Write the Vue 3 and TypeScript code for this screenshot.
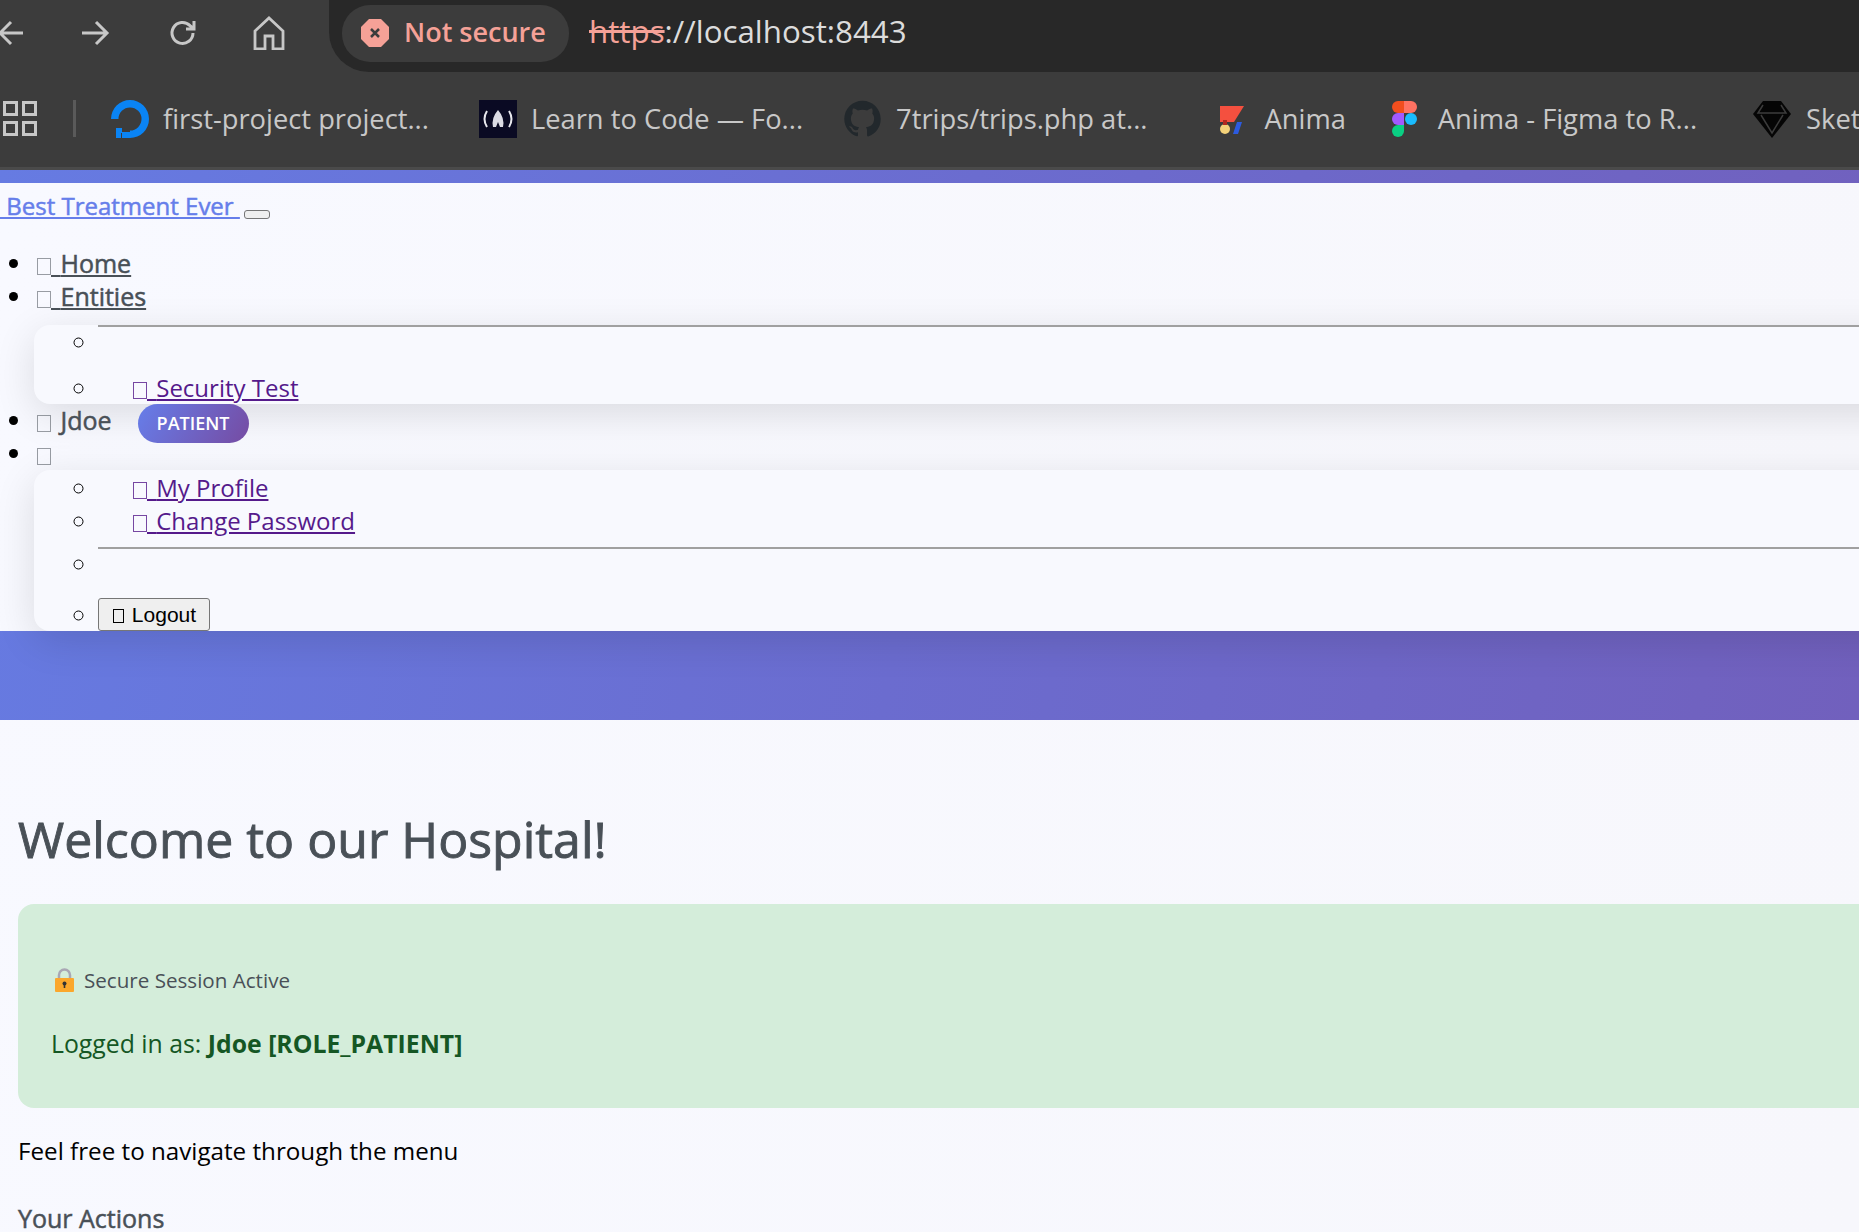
<template>
  <div class="screen">
    <!-- browser chrome, part of the screenshot -->
    <div class="toolbar">
      <svg class="tool back" width="28" height="28" viewBox="0 0 28 28"><path d="M26 14H3M14 3 3 14l11 11" /></svg>
      <svg class="tool forward" width="30" height="28" viewBox="0 0 30 28"><path d="M2 14h25M16 3l11 11-11 11" /></svg>
      <svg class="tool reload" width="30" height="30" viewBox="0 0 30 30"><path d="M25 15a10.500 10.500 0 1 1-3-7.400L26 11M26 3v8h-8" /></svg>
      <svg class="tool home" width="32" height="34" viewBox="0 0 32 34"><path d="M2 15 16 2l14 13v18H20V20h-8v13H2z" /></svg>
      <div class="omnibox">
        <div class="chip">
          <svg width="28" height="28" viewBox="0 0 28 28"><path class="octagon" d="M8 0h12l8 8v12l-8 8H8l-8-8V8z" /><path class="cross" d="m10 10 8 8m0-8-8 8" /></svg>
          <span class="chip-text">Not secure</span>
        </div>
        <span class="url"><s>https</s>://localhost:8443</span>
      </div>
    </div>

    <div class="bookmarks">
      <svg class="apps" width="34" height="35" viewBox="0 0 34 35">
        <rect x="1.500" y="1.500" width="12" height="12" /><rect x="20.500" y="1.500" width="12" height="12" />
        <rect x="1.500" y="21.500" width="12" height="12" /><rect x="20.500" y="21.500" width="12" height="12" />
      </svg>
      <i class="sep"></i>
      <a v-for="b in bookmarks" :key="b.icon" class="mark" :class="'mark-' + b.icon">
        <svg v-if="b.icon === 'ocean'" width="39" height="38" viewBox="0 0 39 38">
          <path d="M20 38v-7.500A11.500 11.500 0 1 0 8.500 19H1A19 19 0 1 1 20 38z" fill="#0a84f5" />
          <path d="M12 32h8v6h-8zM6 28h6v5H6zM6 33h5v5H6z" fill="#0a84f5" />
        </svg>
        <svg v-else-if="b.icon === 'code'" width="38" height="38" viewBox="0 0 38 38">
          <rect width="38" height="38" fill="#0a0a23" />
          <path d="M8 11q-5 8 0 16M30 11q5 8 0 16" fill="none" stroke="#e8e8ee" stroke-width="2" />
          <path d="M19 10q7 8 5 17h-3l-2-5-2 5h-3q-2-9 5-17z" fill="#dcdce4" />
        </svg>
        <svg v-else-if="b.icon === 'github'" width="39" height="38" viewBox="0 0 24 24">
          <path fill="#22282c" d="M12 .5C5.650.5.500 5.650.500 12c0 5.080 3.290 9.390 7.860 10.910.57.100.78-.250.78-.550v-2c-3.200.700-3.870-1.370-3.870-1.370-.52-1.330-1.280-1.680-1.280-1.680-1.040-.710.080-.700.080-.700 1.150.080 1.760 1.190 1.760 1.190 1.030 1.750 2.690 1.250 3.350.950.100-.740.400-1.250.730-1.540-2.550-.290-5.240-1.280-5.240-5.680 0-1.250.450-2.280 1.180-3.080-.120-.290-.510-1.460.110-3.040 0 0 .970-.310 3.170 1.180a11 11 0 0 1 5.760 0c2.200-1.490 3.170-1.180 3.170-1.180.620 1.580.230 2.750.110 3.040.740.800 1.180 1.830 1.180 3.080 0 4.410-2.690 5.380-5.250 5.670.410.360.780 1.050.780 2.120v3.140c0 .310.210.660.790.550A11.500 11.500 0 0 0 23.500 12C23.500 5.650 18.350.500 12 .500z" />
        </svg>
        <svg v-else-if="b.icon === 'anima'" width="27" height="30" viewBox="0 0 27 30">
          <path d="M3 2h24L17 18H3z" fill="#f4503f" />
          <path d="M20 18h5l-4 12h-5z" fill="#2c5be0" />
          <circle cx="8" cy="25" r="5" fill="#f3d27a" />
          <rect x="6" y="16" width="4" height="5" fill="#b12a20" />
        </svg>
        <svg v-else-if="b.icon === 'figma'" width="25" height="36" viewBox="0 0 25 36">
          <path d="M12 0H6a6 6 0 0 0 0 12h6z" fill="#f24e1e" />
          <path d="M12 0h7a6 6 0 0 1 0 12h-7z" fill="#ff7262" />
          <path d="M12 12H6a6 6 0 0 0 0 12h6z" fill="#a259ff" />
          <circle cx="19" cy="18" r="6" fill="#1abcfe" />
          <path d="M6 24h6v6a6 6 0 1 1-6-6z" fill="#0acf83" />
        </svg>
        <svg v-else width="38" height="38" viewBox="0 0 38 38">
          <path d="M10 1h18l10 13-19 24L0 14z" fill="#050505" />
          <path d="M10 5 5 13h28l-5-8M8 15l11 18 11-18" fill="none" stroke="#3c3c3c" stroke-width="1.500" />
        </svg>
        <span>{{ b.label }}</span>
      </a>
    </div>

    <!-- the page itself -->
    <nav class="navbar">
      <div class="navbar-body">
        <div class="brand-row">
          <a class="brand"> Best Treatment Ever </a>
          <button class="toggler" type="button"></button>
        </div>
        <ul class="nav-list">
          <li class="nav-item"><a class="nav-link"><i class="tofu"></i><span class="gap">&nbsp;</span>Home</a></li>
          <li class="nav-item"><a class="nav-link"><i class="tofu"></i><span class="gap">&nbsp;</span>Entities</a></li>
          <ul class="menu menu-first">
            <li class="divider-row"><hr /></li>
            <li class="menu-last"><a class="menu-link"><i class="tofu"></i><span class="gap">&nbsp;</span>Security Test</a></li>
          </ul>
          <li class="nav-item user-item">
            <span class="nav-text"><i class="tofu"></i><span class="gap">&nbsp;</span>Jdoe</span>
            <span class="pill">PATIENT</span>
          </li>
          <li class="nav-item tofu-item"><i class="tofu"></i></li>
          <ul class="menu menu-second">
            <li><a class="menu-link"><i class="tofu"></i><span class="gap">&nbsp;</span>My Profile</a></li>
            <li><a class="menu-link"><i class="tofu"></i><span class="gap">&nbsp;</span>Change Password</a></li>
            <li class="divider-row"><hr /></li>
            <li class="logout-row"><button class="logout" type="button"><i class="tofu"></i><span class="gap">&nbsp;</span>Logout</button></li>
          </ul>
        </ul>
      </div>
    </nav>

    <main class="content">
      <h1>Welcome to our Hospital!</h1>
      <section class="alert">
        <h5><svg width="19" height="24" viewBox="0 0 19 24"><path d="M4 11V7a5.500 5.500 0 0 1 11 0v4" fill="none" stroke="#a9a7b4" stroke-width="2.500" /><rect y="10" width="19" height="14" rx="1" fill="#fba72c" /><circle cx="9.500" cy="15.500" r="2" fill="#333" /><rect x="8.700" y="16" width="1.600" height="4" fill="#333" /></svg> Secure Session Active</h5>
        <p>Logged in as: <strong>Jdoe [ROLE_PATIENT]</strong></p>
      </section>
      <p class="lead">Feel free to navigate through the menu</p>
      <h3>Your Actions</h3>
    </main>
  </div>
</template>

<script setup lang="ts">
interface Bookmark {
  icon: string;
  label: string;
}

const bookmarks: Bookmark[] = [
  { icon: 'ocean', label: 'first-project project...' },
  { icon: 'code', label: 'Learn to Code — Fo...' },
  { icon: 'github', label: '7trips/trips.php at...' },
  { icon: 'anima', label: 'Anima' },
  { icon: 'figma', label: 'Anima - Figma to R...' },
  { icon: 'sketch', label: 'Sketch' },
];
</script>

<style>
html, body { margin: 0; background: #f8f9ff; }
</style>

<style scoped>
.screen {
  width: 1859px;
  height: 1232px;
  overflow: hidden;
  background: linear-gradient(100deg, #f8f9ff, #f7f7fc);
  font-family: "Open Sans", "Noto Sans", sans-serif;
  color: #000;
}

/* browser chrome */
.toolbar {
  display: flex;
  align-items: center;
  height: 72px;
  background: #3c3c3c;
}
.tool { fill: none; stroke: #c7c7c7; stroke-width: 3; flex: none; margin-top: -6px; }
.back { margin-left: -3px; }
.forward { margin-left: 55px; }
.reload { margin-left: 58px; }
.home { margin-left: 55px; stroke-width: 2.800; }
.omnibox {
  display: flex;
  align-items: center;
  flex: 1;
  height: 72px;
  margin-left: 44px;
  padding-left: 13px;
  background: #282828;
  border-radius: 0 0 0 40px;
  box-sizing: border-box;
}
.chip {
  display: flex;
  align-items: center;
  gap: 15px;
  height: 57px;
  margin-top: -6px;
  width: 227px;
  padding-left: 19px;
  box-sizing: border-box;
  border-radius: 28px;
  background: #3c3c3c;
  color: #f5a197;
  font-size: 27px;
  font-weight: 600;
}
.chip-text { margin-top: -4px; }
.octagon { fill: #f5a197; }
.cross { fill: none; stroke: #3c3c3c; stroke-width: 2.500; }
.url { margin-left: 20px; margin-top: -11px; color: #dcdcdc; font-size: 31.300px; }
.url s { color: #f5a197; }

.bookmarks {
  display: flex;
  align-items: center;
  height: 98px;
  padding-bottom: 2px;
  box-sizing: border-box;
  background: #3c3c3c;
  border-bottom: 3px solid #4a4a4a;
  white-space: nowrap;
  color: #c8c8c8;
  font-size: 27.300px;
}
.apps { fill: none; stroke: #c7c7c7; stroke-width: 3; margin-left: 3px; flex: none; }
.sep { width: 3px; height: 37px; margin-left: 36px; background: #5a5a5a; flex: none; }
.mark { display: flex; align-items: center; gap: 14px; flex: none; }
.mark svg { flex: none; }
.mark-ocean { margin-left: 34px; }
.mark-code { margin-left: 50px; }
.mark-github { margin-left: 40px; }
.mark-anima { margin-left: 69px; gap: 21px; }
.mark-figma { margin-left: 46px; gap: 21px; }
.mark-sketch { margin-left: 56px; gap: 15px; }

/* navbar */
.navbar {
  background: linear-gradient(100deg, #667be2 0%, #6b6ccf 50%, #7160bd 100%);
  padding: 13px 0 89px;
}
.navbar-body { background: linear-gradient(100deg, #f8f9ff, #f7f7fc); height: 448px; }
.brand-row { display: flex; align-items: flex-end; height: 41px; }
.brand {
  color: #667eea;
  font-size: 24px;
  font-weight: 500;
  -webkit-text-stroke: 0.5px #667eea;
  text-decoration: underline;
  white-space: pre;
  line-height: 37px;
}
.toggler {
  width: 26px;
  height: 9px;
  margin: 0 0 5px 4px;
  padding: 0;
  background: #efefef;
  border: 1px solid #767676;
  border-radius: 3px;
}
.nav-list {
  margin: 23px 0 0;
  padding: 0 0 0 37px;
  font-size: 25px;
  line-height: 33px;
}
.nav-item { position: relative; list-style: none; font-weight: 500; }
.nav-item::before {
  content: "";
  position: absolute;
  left: -28px;
  top: 12px;
  width: 9px;
  height: 9px;
  border-radius: 50%;
  background: #000;
}
.nav-link { color: #495057; -webkit-text-stroke: 0.5px #495057; text-decoration: underline; white-space: pre; }
.nav-text { color: #495057; -webkit-text-stroke: 0.5px #495057; white-space: pre; }
.gap { word-spacing: 3px; }
.tofu-item { color: #495057; }
.tofu {
  display: inline-block;
  width: 12px;
  height: 15px;
  border: 1px solid currentColor;
  opacity: 0.55;
  vertical-align: -2px;
}
.menu {
  position: relative;
  margin: 0 -80px 0 -3px;
  padding: 0 0 0 64px;
  background: #f8f9fe;
  border-radius: 16px;
  box-shadow: 0 10px 40px rgba(0, 0, 0, 0.12);
  list-style: circle;
  font-size: 24px;
  font-weight: 400;
  line-height: 33px;
}
.menu-first { height: 79px; box-sizing: border-box; margin-top: 12px; }
.menu-second { height: 161px; padding-top: 1px; box-sizing: border-box; z-index: 1; }
.divider-row { height: 46px; }
.divider-row hr { margin: 0; border: 0; border-top: 2px solid #a0a0a0; }
.menu-second .divider-row { margin-top: 10px; height: 51px; }
.menu-link { margin-left: 35px; color: #551a8b; text-decoration: underline; white-space: pre; }
.menu-link .tofu { opacity: 0.8; }
.user-item { z-index: 1; height: 33px; }
.pill {
  display: inline-block;
  margin: -3px 0 -3px 26px;
  padding: 0 19px;
  height: 39px;
  line-height: 39px;
  border-radius: 20px;
  background: linear-gradient(120deg, #667eea, #764ba2);
  color: #fff;
  font-size: 18px;
  font-weight: 600;
  vertical-align: middle;
}
.logout {
  height: 33px;
  padding: 0 13px 0 14px;
  background: #efefef;
  border: 1px solid #767676;
  border-radius: 3px;
  color: #000;
  font-family: "Liberation Sans", Arial, sans-serif;
  font-size: 21px;
  vertical-align: top;
}
.logout .gap { word-spacing: 2px; }
.logout .tofu { opacity: 1; width: 9px; height: 12px; vertical-align: -1px; }

/* page content */
.content { padding: 0 0 0 18px; }
h1 {
  margin: 90px 0 0;
  color: #495057;
  font-size: 50px;
  font-weight: 500;
  -webkit-text-stroke: 0.9px #495057;
  line-height: 58px;
}
.alert {
  margin: 36px 0 0;
  height: 204px;
  padding: 62px 33px 0;
  box-sizing: border-box;
  background: #d4edda;
  border-radius: 16px 0 0 16px;
  color: #155724;
  font-size: 24.800px;
}
h5 {
  display: flex;
  align-items: center;
  gap: 10px;
  margin: 0 0 0 4px;
  color: #495057;
  font-size: 20.600px;
  font-weight: 500;
  line-height: 28px;
}
.alert p { margin: 33px 0 0; line-height: 32px; }
.lead { margin: 27px 0 0; font-size: 24.200px; line-height: 32px; }
h3 { margin: 35px 0 0; color: #495057; font-size: 25px; font-weight: 500; -webkit-text-stroke: 0.5px #495057; line-height: 32px; }
</style>
